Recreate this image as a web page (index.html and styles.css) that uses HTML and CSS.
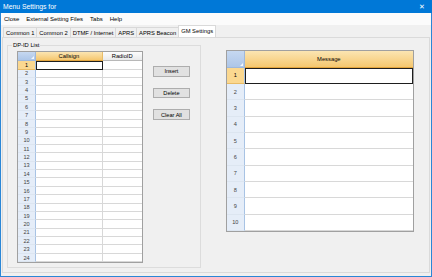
FILE: index.html
```html
<!DOCTYPE html>
<html lang="en">
<head>
    <meta charset="UTF-8">
    <title>Menu Settings for</title>
    <link rel="stylesheet" href="styles.css">
</head>
<body>
    <div class="window">
        <div class="titlebar">
            <span>Menu Settings for</span>
            <span class="close-x">&#x2715;</span>
        </div>
        <div class="frame">
            <div class="menubar">
                <span>Close</span>
                <span>External Setting Files</span>
                <span>Tabs</span>
                <span>Help</span>
            </div>
            <div class="tabs">
                <span class="tab">Common 1</span>
                <span class="tab">Common 2</span>
                <span class="tab">DTMF / Internet</span>
                <span class="tab">APRS</span>
                <span class="tab">APRS Beacon</span>
                <span class="tab active">GM Settings</span>
            </div>
            <div class="panel">
                <fieldset class="group">
                    <legend>DP-ID List</legend>
                    <div class="grid grid-dpid" id="dpidGrid">
                        <div class="corner"></div>
                        <div class="colhead selected">Callsign</div>
                        <div class="colhead">RadioID</div>
                    </div>
                    <div class="buttons">
                        <button>Insert</button>
                        <button>Delete</button>
                        <button>Clear All</button>
                    </div>
                </fieldset>
                <div class="grid grid-msg" id="msgGrid">
                    <div class="corner"></div>
                    <div class="colhead selected">Message</div>
                </div>
            </div>
        </div>
    </div>

    <script>
        // fill grid rows
        function addRows(id, count, cols) {
            var grid = document.getElementById(id);
            for (var i = 1; i <= count; i++) {
                var head = document.createElement('div');
                head.className = 'rowhead' + (i === 1 ? ' selected' : '');
                head.innerText = i;
                grid.appendChild(head);
                for (var c = 0; c < cols; c++) {
                    var cell = document.createElement('div');
                    cell.className = 'cell' + (i === 1 && c === 0 ? ' current' : '');
                    grid.appendChild(cell);
                }
            }
        }
        addRows('dpidGrid', 24, 2);
        addRows('msgGrid', 10, 1);
    </script>
</body>
</html>
```
FILE: styles.css
```css
body {
    margin: 0;
    font-family: "Liberation Sans", Arial, sans-serif;
    font-size: 6px;
    color: #000;
}
.window {
    width: 432px;
    height: 277px;
    display: flex;
    flex-direction: column;
    background-color: #f0f0f0;
}
.titlebar {
    height: 13px;
    flex: none;
    background-color: #0078d7;
    color: #fff;
    font-size: 6.8px;
    display: flex;
    align-items: center;
    justify-content: space-between;
    padding: 0 7px 0 3px;
}
.close-x {
    font-size: 7px;
}
.frame {
    flex: 1;
    border: 1px solid #2a86d6;
    border-top: none;
    display: flex;
    flex-direction: column;
}
.menubar {
    height: 12px;
    background-color: #fbfbfb;
    display: flex;
    align-items: center;
    gap: 7px;
    padding-left: 3px;
}
.tabs {
    height: 12px;
    display: flex;
    align-items: flex-end;
    padding-left: 2px;
    font-size: 5.8px;
}
.tab {
    height: 10px;
    line-height: 10px;
    padding: 0 2px;
    border: 1px solid #d9d9d9;
    border-bottom: none;
    margin-right: -1px;
    background-color: #f0f0f0;
    box-sizing: border-box;
}
.tab.active {
    height: 12px;
    line-height: 11px;
    background-color: #fff;
    padding: 0 2px;
}
.panel {
    flex: 1;
    margin: 0 1px 3px 1px;
    border: 1px solid #dadada;
    display: flex;
    align-items: flex-start;
    font-size: 5.8px;
}
.group {
    margin: 4px 0 0 4px;
    padding: 0 0 0 9px;
    width: 194px;
    height: 226px;
    box-sizing: border-box;
    border: 1px solid #dcdcdc;
    display: flex;
    align-items: flex-start;
}
.group legend {
    padding: 0 1px;
    margin-left: -5px;
    line-height: 6px;
}
.grid {
    display: grid;
    border: 1px solid #a0a0a0;
    background-color: #fff;
    text-align: center;
}
.grid-dpid {
    margin-top: 3.2px;
    grid-template-columns: 18px 66.7px 39px;
    grid-template-rows: 9px repeat(24, 8.375px);
}
.grid-msg {
    margin: 12px 0 0 25px;
    grid-template-columns: 17.7px 168.3px;
    grid-template-rows: 16.7px repeat(10, 16.33px);
}
.grid > div {
    box-sizing: border-box;
    border-right: 1px solid #d8d8d8;
    border-bottom: 1px solid #d8d8d8;
    display: flex;
    align-items: center;
    justify-content: center;
    overflow: hidden;
}
.grid .corner {
    background: linear-gradient(#c6d8f0, #adc6e8);
    border-right-color: #9fb8da;
    border-bottom-color: #9fb8da;
    position: relative;
}
.grid .corner::after {
    content: "";
    position: absolute;
    right: 1px;
    bottom: 1px;
    border-left: 3px solid transparent;
    border-bottom: 3px solid #f4f8fd;
}
.grid .colhead {
    background: linear-gradient(#fdfdfd, #e9eaeb);
    border-right-color: #c4c4c4;
    border-bottom-color: #b8b8b8;
}
.grid .colhead.selected {
    background: linear-gradient(#fbe5b2, #f5c76f);
    border-bottom-color: #e2a53e;
    border-right-color: #e8bd6a;
}
.grid .rowhead {
    background-color: #e5edf8;
    color: #444;
    font-size: 5.6px;
    border-right-color: #a8c3e4;
    border-bottom-color: #dce5f0;
}
.grid .rowhead.selected {
    background-color: #fbd890;
    border-bottom-color: #e8bb66;
    color: #000;
}
.grid .cell.current {
    border: 1.5px solid #1e1e1e;
}
.grid-dpid > div:nth-child(3n),
.grid-msg > div:nth-child(2n) {
    border-right: none;
}
.buttons {
    display: flex;
    flex-direction: column;
    gap: 11px;
    margin: 18px 0 0 10px;
}
.buttons button {
    width: 37.5px;
    height: 10.7px;
    padding: 0;
    font-family: inherit;
    font-size: 5.6px;
    background-color: #e1e1e1;
    border: 1px solid #adadad;
    border-radius: 0;
}
```
